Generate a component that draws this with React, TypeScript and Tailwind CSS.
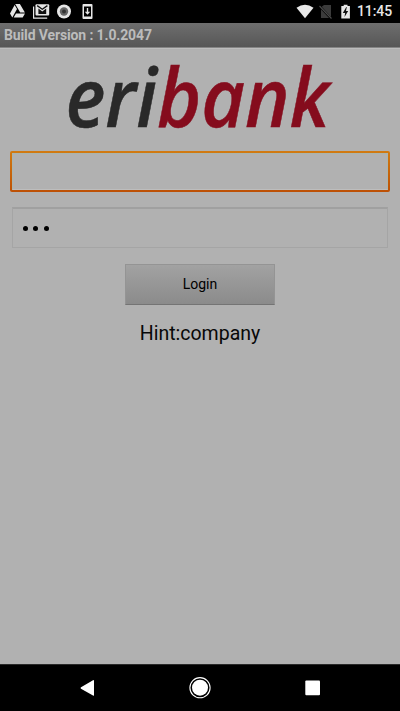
const logoFont = '"Open Sans", "Noto Sans", sans-serif';

function Logo() {
  return (
    <svg className="block h-[92px] w-full overflow-visible" viewBox="0 0 400 92" role="img" aria-label="eribank">
      <text
        x="65.5"
        y="78"
        fill="#292929"
        stroke="#292929"
        strokeWidth="0.5"
        fontFamily={logoFont}
        fontSize="82"
        fontStyle="italic"
        fontWeight="600"
        textLength="264"
        lengthAdjust="spacingAndGlyphs"
      >
        eri<tspan fill="#850c1d" stroke="#850c1d">bank</tspan>
      </text>
    </svg>
  );
}

function StatusBar() {
  return (
    <header className="flex h-[23px] items-center justify-between bg-black text-[#e6e6e6]">
      <svg className="h-[23px] w-[110px]" viewBox="0 0 110 23" fill="currentColor">
        <path d="M15.2 4h4.7l5 8.6h-4.7zM14.6 5l2.4 4.1-4.7 8.4L10 13.4zM16 13.5h9L22.7 17.6h-9z" />
        <path d="M33.6 6.5v11.6h13.6" fill="none" stroke="currentColor" strokeWidth="1.2" />
        <rect x="35.5" y="4.3" width="13.7" height="11.2" rx="1" />
        <path d="m37.2 5.6 5.1 3.7 5.1-3.7" fill="none" stroke="#111" strokeWidth="1.3" />
        <path d="M38.4 8.6v5.3h7.8V8.6l-3.9 3z" fill="#111" />
        <circle cx="64" cy="11.5" r="7" />
        <circle cx="64" cy="11.5" r="4.2" fill="#666" />
        <circle cx="64" cy="11.5" r="2" fill="#333" />
        <path fillRule="evenodd" d="M83.5 4h8q1 0 1 1v13q0 1-1 1h-8q-1 0-1-1V5q0-1 1-1zM84 6.5v10h7v-10z" />
        <path d="M86.8 8h1.4v3.7h2l-2.7 3-2.7-3h2z" />
      </svg>
      <div className="flex items-center pr-[8px]">
        <svg className="h-[23px] w-[61px]" viewBox="0 0 61 23">
          <path fill="#e8e8e8" d="M0.5 7.8Q9 1.8 17.5 7.8L9 18.3z" />
          <path fill="#3b3b3b" d="M26 6.5 28 5h7v13H25V8z" />
          <path d="m23 5.5 12 13" stroke="#000" strokeWidth="2.2" />
          <path d="m23.5 6 12 12.5" stroke="#4c4c4c" strokeWidth="1.1" />
          <path fill="#e6e6e6" d="M45.3 6h2.4V4.8h3.8V6h2.4v12.5h-8.6z" />
          <path d="m50.3 7-3.5 6h2.3l-.6 4 3.7-6H50l.8-4z" fill="#111" />
        </svg>
        <span className="w-[35px] whitespace-nowrap text-[14px] leading-[23px] font-medium tracking-[-0.1px]">11:45</span>
      </div>
    </header>
  );
}

export default function App() {
  return (
    <div className="flex h-[711px] w-[400px] flex-col bg-[#b1b1b1] font-['Roboto',sans-serif]">
      <StatusBar />
      <div className="h-[25px] border-b border-[#858585] bg-linear-to-b from-[#6e6e6e] to-[#575757] pl-1 text-[14px] leading-[25px] font-bold tracking-[-0.13px] text-[#bcbcbc]">
        Build Version : 1.0.2047
      </div>
      <main className="flex flex-1 flex-col items-center border-t border-[#bdbdbd]">
        <Logo />
        <div className="mt-[10px] h-[41px] w-[380px] rounded-[2px] bg-linear-to-b from-[#d17a12] to-[#bd5005] p-[2px]">
          <div className="h-full border border-[#aab5ad] border-b-[#bdbdbd] bg-[#b1b1b1]" />
        </div>
        <div className="mt-[15px] flex h-[41px] w-[376px] items-center gap-[5.5px] border border-t-2 border-[#a5a5a5] border-t-[#a0a0a0] pl-[9.5px]">
          <span className="size-[5px] rounded-full bg-black" />
          <span className="size-[5px] rounded-full bg-black" />
          <span className="size-[5px] rounded-full bg-black" />
        </div>
        <button className="mt-[16px] h-[41px] w-[150px] border border-[#949494] border-b-[#747474] bg-linear-to-b from-[#a2a2a2] to-[#8b8b8b] text-[14px] text-black">
          Login
        </button>
        <p className="mt-[15px] text-[19.5px] leading-[28px] text-[#080808]">Hint:company</p>
      </main>
      <nav className="h-[47px] border-t border-[#292929] bg-black">
        <svg className="h-[46px] w-full" viewBox="0 0 400 46" fill="#fff">
          <path d="M81 22.2 93 15.2q1-.5 1 .7v14q0 1.2-1 .7L81 23.8q-1-.8 0-1.6z" />
          <circle cx="200" cy="22.7" r="10.1" fill="none" stroke="#fff" strokeWidth="1.1" />
          <circle cx="200" cy="22.7" r="8" />
          <rect x="305.3" y="15.5" width="14.7" height="14.7" rx="1" />
        </svg>
      </nav>
    </div>
  );
}
